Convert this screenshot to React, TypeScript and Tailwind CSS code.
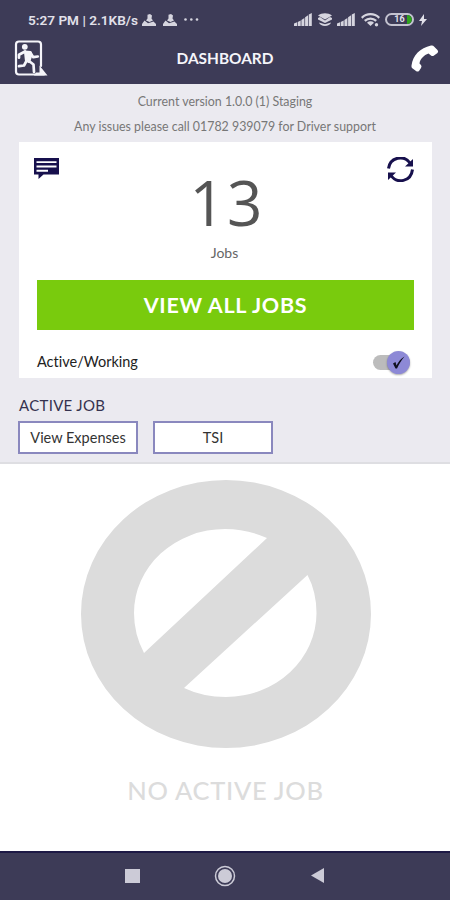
import type { ReactNode } from "react";

const Signal = () => (
  <svg width="18" height="13" viewBox="0 0 18 13" fill="#d6d5df">
    <path d="M0 10.500 3 9.300V13H0zM3.700 9l3-1.500V13h-3zM7.400 7l3-2v8h-3zM11.100 4.300l3-2V13h-3zM14.800 1.500 17.800 0v13h-3z" />
  </svg>
);

const Upload = () => (
  <svg width="14" height="12" viewBox="0 0 14 12" fill="#d6d5df">
    <path d="M5.500.8 8 0l2 1.500-.5 3L11 6.500 7.500 8 4 6.500l1.500-2zM2.500 6.500l3.500 2.700 5.500-1.700L14 10v2H0v-2z" />
  </svg>
);

const Text = ({ className, children }: { className: string; children: ReactNode }) => (
  <span className={`block whitespace-nowrap ${className}`}>{children}</span>
);

const StatusBar = () => (
  <div className="flex h-8 items-center pt-[7px] pl-7 text-[#e2e1ea]">
    <Text className="w-[112px] font-[Roboto,sans-serif] text-[13.600px] leading-4 font-semibold">
      5:27 PM | 2.1KB/s
    </Text>
    <div className="ml-[2px] flex items-center gap-[7px]">
      <Upload />
      <Upload />
      <svg width="15" height="3" viewBox="0 0 15 3" fill="#d6d5df">
        <circle cx="1.5" cy="1.5" r="1.3" />
        <circle cx="7.3" cy="1.5" r="1.3" />
        <circle cx="13" cy="1.5" r="1.3" />
      </svg>
    </div>
    <div className="ml-auto flex items-center pr-[23px]">
      <Signal />
      <svg className="ml-[6px]" width="14" height="13" viewBox="0 0 14 13" fill="#d6d5df">
        <path d="M0 2.500C4-.6 10-.6 14 2.500L7 6.500zM0 5l2-1 5 3.500L12 4l2 1v1.500L7 10 0 6.500zM1 9.500l6 1.800 6-1.800c-1 4.600-11 4.600-12 0z" />
      </svg>
      <span className="ml-[5px]"><Signal /></span>
      <svg className="ml-[6px]" width="19" height="14" viewBox="0 0 19 14" fill="none" stroke="#d6d5df" strokeWidth="2.300">
        <path d="M.7 4.800c5-4.800 12.600-4.800 17.600 0M3.800 7.900c3.200-3 8.200-3 11.400 0" />
        <path d="m6 9.700 3.500 3.300L13 9.700c-2-1.800-5-1.800-7 0z" fill="#d6d5df" stroke="none" />
        <circle cx="15.500" cy="11.800" r="1.700" fill="#d6d5df" stroke="none" />
      </svg>
      <div className="relative ml-[5px] flex h-[13px] w-[29px] items-center justify-center overflow-hidden rounded-full border-2 border-[#c4c3d0]">
        <span className="absolute top-0 right-0 bottom-0 w-[5px] rounded-r-full bg-[#2ea51c]" />
        <span className="font-[Roboto,sans-serif] text-[9px] leading-none font-bold">16</span>
      </div>
      <svg className="ml-[5px]" width="8" height="12" viewBox="0 0 8 12" fill="#e2e1ea">
        <path d="M5 0 0 7h3L2 12l6-7H5z" />
      </svg>
    </div>
  </div>
);

const ExitIcon = () => (
  <svg width="34" height="36" viewBox="0 0 34 36" fill="none" stroke="#f5f5fa" strokeLinecap="round" strokeLinejoin="round">
    <path d="M27 26V4.500Q27 1.500 24 1.500H5Q2 1.500 2 4.500V31.500Q2 34.500 5 34.500H30" strokeWidth="2.200" />
    <path d="M25.500 25.500 33.500 35.600H20l2-3.200h3.500z" fill="#f5f5fa" stroke="none" />
    <circle cx="10.800" cy="6.800" r="2.900" fill="#f5f5fa" stroke="none" />
    <path d="m11 11.500 5.500.5 1 3-2.500 7-3-1.500z" fill="#f5f5fa" strokeWidth="2.200" />
    <path d="m11 11.500-6 3.200v3M16.500 13l2.800 4.200 4.500-.7M13 20l-3 5.500-5 .7M15 21l4.500 3.500L20 32" strokeWidth="2.700" />
  </svg>
);

const Header = () => (
  <div className="grid h-[52px] grid-cols-[1fr_auto_1fr] items-center">
    <div className="pl-[14px]">
      <ExitIcon />
    </div>
    <Text className="pt-px font-[Lato,sans-serif] text-[15.400px] font-bold text-[#f5f5fa]">DASHBOARD</Text>
    <div className="flex justify-end pr-[11px]">
      <svg width="28" height="27" viewBox="0 0 28 27" fill="white">
        <path d="M.5 20.500C2 10 9 3 20 .5q2-.5 3 1l3.500 3.500q1.300 1.500 0 3L23 10.500q-1.500 1-3 0l-2.500-2C13 10 9 14 8.500 18.500L10 20q1 1.500 0 3l-2 3q-1.500 1-3 0L1 23Q.3 22 .5 20.500z" />
      </svg>
    </div>
  </div>
);

const JobsCard = () => (
  <div className="mr-[18px] ml-[19px] h-[236px] bg-white px-[18px]">
    <div className="flex h-[138px] items-start justify-between">
      <svg className="mt-[16px] -ml-[3px]" width="25" height="21" viewBox="0 0 25 21" fill="#17104d">
        <path fillRule="evenodd" d="M0 0h25v16.500H9.500L4.500 21v-4.500H0zM2.500 3.200v1.900h20V3.200zM2.500 7.500v1.900h20V7.500zM2.500 11.800v1.900h11.500v-1.900z" />
      </svg>
      <div className="ml-[3px] flex flex-col items-center">
        <Text className="mt-[26px] pl-[5px] font-['Open_Sans',sans-serif] text-[62px] leading-[68px] tracking-[2px] text-[#555]">13</Text>
        <Text className="mt-[7px] font-[Lato,sans-serif] text-[14px] leading-5 text-[#666]">Jobs</Text>
      </div>
      <svg className="mt-[15px]" width="27" height="25" viewBox="0 0 27 25" fill="none" stroke="#17104d" strokeWidth="3">
        <path d="M1.500 11.500C3 0 17-2.500 23 6M25.500 12.500C24 25 10 27 4 18.500" />
        <path d="M26 2v7.500h-8zM1 23v-7.500h8z" fill="#17104d" stroke="none" />
      </svg>
    </div>
    <button className="flex h-[50px] w-full items-center justify-center bg-[#79cb0d] font-[Lato,sans-serif] text-[21.500px] font-bold tracking-[0.700px] text-white">
      VIEW ALL JOBS
    </button>
    <div className="flex h-[48px] items-center justify-between pt-[16px] pr-[4px]">
      <Text className="font-[Lato,sans-serif] text-[14.500px] text-[#222] [font-variant-ligatures:none]">Active/Working</Text>
      <div className="flex h-[15px] w-[37px] items-center justify-end rounded-full bg-[#bcbcbc]">
        <span className="flex size-[23px] shrink-0 items-center justify-center rounded-full bg-[#8d89d6] shadow-[0_1px_2px_#0005]">
          <svg width="13" height="13" viewBox="0 0 13 13" fill="#101020">
            <path d="M1 7.500 3.500 6l1 3.500C6.500 5.500 9 2.500 12.500.5 9.500 4 7 8 5 12.500H3.500z" />
          </svg>
        </span>
      </div>
    </div>
  </div>
);

const JobButton = ({ label }: { label: string }) => (
  <button className="flex h-[33px] w-[120px] items-center justify-center border-2 border-[#8a88be] bg-white pt-px font-[Lato,sans-serif] text-[14.500px] whitespace-nowrap text-[#333]">
    {label}
  </button>
);

const NavBar = () => (
  <div className="flex h-[49px] items-center border-t-2 border-[#1d1945] bg-[#3d3b57] pb-[2px] pl-[125px]">
    <span className="h-[14px] w-[15px] bg-[#cccbd7]" />
    <svg className="ml-[74px]" width="22" height="22" viewBox="0 0 22 22" fill="#cccbd7">
      <circle cx="11" cy="11" r="9.500" fill="none" stroke="#cccbd7" strokeWidth="1.500" />
      <circle cx="11" cy="11" r="7" />
    </svg>
    <svg className="ml-[75px]" width="13" height="15" viewBox="0 0 13 15" fill="#cccbd7">
      <path d="M13 0v15L0 7.500z" />
    </svg>
  </div>
);

export default function App() {
  return (
    <div className="flex h-[900px] w-[450px] flex-col overflow-hidden bg-white">
      <header className="h-[84px] shrink-0 bg-[#3d3b57]">
        <StatusBar />
        <Header />
      </header>

      <section className="h-[380px] shrink-0 border-b-2 border-[#dedee2] bg-[#ebeaf0]">
        <div className="flex h-[58px] flex-col items-center pt-[9px] font-[Lato,sans-serif] text-[12.400px] text-[#777]">
          <Text className="leading-[18px]">Current version 1.0.0 (1) Staging</Text>
          <Text className="mt-[7px] leading-[18px]">Any issues please call 01782 939079 for Driver support</Text>
        </div>
        <JobsCard />
        <div className="px-[18px] pt-[17px]">
          <Text className="pl-px font-[Lato,sans-serif] text-[15px] leading-5 tracking-[0.300px] text-[#35324f]">ACTIVE JOB</Text>
          <div className="mt-[6px] flex gap-[15px]">
            <JobButton label="View Expenses" />
            <JobButton label="TSI" />
          </div>
        </div>
      </section>

      <main className="flex flex-1 flex-col items-center pt-[15px]">
        <svg width="292" height="270" viewBox="0 0 292 270">
          <path
            fill="#dcdcdc"
            fillRule="evenodd"
            d="M2 135A145 134 0 1 1 292 135A145 134 0 1 1 2 135zM188 59Q168 50 146 50A91 84 0 0 0 55 134Q55 155 65 174zM228.500 96 105 209Q124 218 147 218A91 84 0 0 0 237.500 134Q237.500 113 228.500 96z"
          />
        </svg>
        <Text className="mt-[25px] pl-px font-[Lato,sans-serif] text-[25.500px] leading-8 font-medium tracking-[0.700px] text-[#dcdcdc]">NO ACTIVE JOB</Text>
      </main>

      <NavBar />
    </div>
  );
}
